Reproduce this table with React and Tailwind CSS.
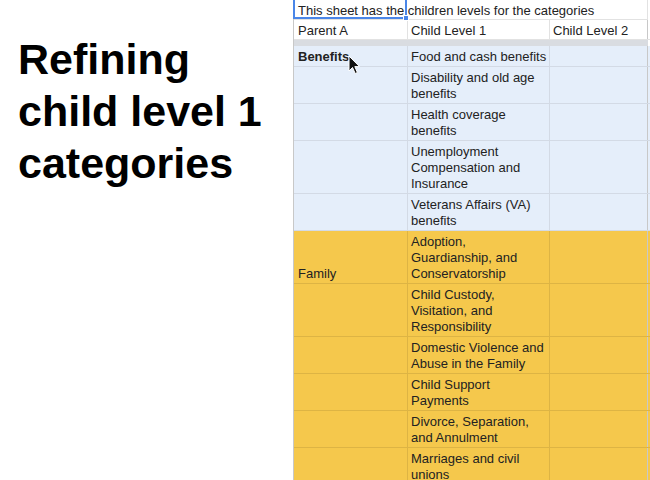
import React from "react";

// rows for the sheet: [parent, child level 1, group]
const rows = [
  { parent: "Benefits", child: ["Food and cash benefits"], group: "blue", bold: true },
  { parent: "", child: ["Disability and old age", "benefits"], group: "blue" },
  { parent: "", child: ["Health coverage", "benefits"], group: "blue" },
  { parent: "", child: ["Unemployment", "Compensation and", "Insurance"], group: "blue" },
  { parent: "", child: ["Veterans Affairs (VA)", "benefits"], group: "blue" },
  { parent: "Family", child: ["Adoption,", "Guardianship, and", "Conservatorship"], group: "yellow" },
  { parent: "", child: ["Child Custody,", "Visitation, and", "Responsibility"], group: "yellow" },
  { parent: "", child: ["Domestic Violence and", "Abuse in the Family"], group: "yellow" },
  { parent: "", child: ["Child Support", "Payments"], group: "yellow" },
  { parent: "", child: ["Divorce, Separation,", "and Annulment"], group: "yellow" },
  { parent: "", child: ["Marriages and civil", "unions"], group: "yellow" },
];

const Cursor = () => (
  <svg
    className="absolute left-[54px] top-[55px]"
    width="13"
    height="20"
    viewBox="0 0 13 20"
  >
    <path
      d="M1 1 L1 16 L4.5 12.5 L7.2 18.5 L9.4 17.5 L6.8 11.6 L11.5 11.6 Z"
      fill="#111"
      stroke="#fff"
      strokeWidth="1"
      strokeLinejoin="round"
    />
  </svg>
);

const SheetRow = ({ row }) => {
  const blue = row.group === "blue";
  const bg = blue ? "bg-[#e5eefa]" : "bg-[#f5c84c]";
  const line = blue ? "border-[#d3dae5]" : "border-[#ddb444]";
  return (
    <div className={`grid grid-cols-[114px_142px_98px] border-b ${line} ${bg}`}>
      <div className={`flex items-end border-r ${line} pl-[4px] pt-[3px] pb-[1px]`}>
        <span className={row.bold ? "font-bold" : ""}>{row.parent}</span>
      </div>
      <div className={`border-r ${line} pl-[3px] pt-[3px] pb-[1px]`}>
        {row.child.map((t, i) => (
          <div key={i}>{t}</div>
        ))}
      </div>
      <div className="border-r border-[#c8c8c8]"></div>
    </div>
  );
};

const App = () => {
  return (
    <div className="w-[650px] h-[480px] overflow-hidden bg-white flex font-['Liberation_Sans',Arial,sans-serif]">
      {/* slide title */}
      <div className="w-[293px] shrink-0 pl-[18px] pt-[33px]">
        <h1 className="text-[43px] leading-[52px] font-bold text-black">
          Refining
          <br />
          child level 1
          <br />
          categories
        </h1>
      </div>

      {/* spreadsheet */}
      <div className="relative w-[357px] shrink-0 border-l border-[#c8c8c8] text-[13px] leading-4 text-[#222]">
        <div className="w-[354px] h-[20px] border-b border-r border-[#e2e2e2] pl-[4px] pt-[3px] whitespace-nowrap">
          This sheet has the children levels for the categories
        </div>
        <div className="grid grid-cols-[114px_142px_98px] h-[20px] border-b border-[#e2e2e2]">
          <div className="border-r border-[#e2e2e2] pl-[4px] pt-[3px]">Parent A</div>
          <div className="border-r border-[#e2e2e2] pl-[3px] pt-[3px]">Child Level 1</div>
          <div className="border-r border-[#c8c8c8] pl-[3px] pt-[3px]">Child Level 2</div>
        </div>
        <div className="w-[354px] h-[6px] bg-[#d9dce1]"></div>
        {rows.map((row, index) => (
          <SheetRow key={index} row={row} />
        ))}

        {/* selected cell A1 */}
        <div className="absolute left-[-1px] top-[-2px] w-[114px] h-[21px] border-2 border-[#4a86e8]"></div>
        <div className="absolute left-[109px] top-[15px] w-[6px] h-[6px] bg-[#4a86e8] border border-white"></div>
        <Cursor />
      </div>
    </div>
  );
};

export default App;
